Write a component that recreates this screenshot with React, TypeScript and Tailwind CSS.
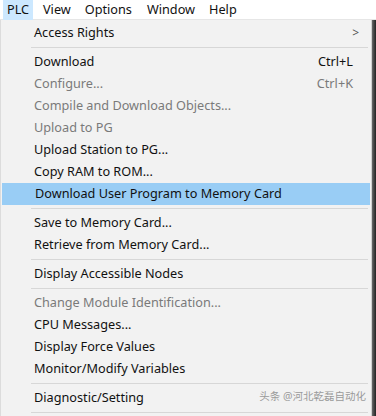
import React from 'react';

type Item = { label: string; shortcut?: string; disabled?: boolean; active?: boolean; submenu?: boolean } | 'sep';

const items: Item[] = [
  { label: 'Access Rights', submenu: true },
  'sep',
  { label: 'Download', shortcut: 'Ctrl+L' },
  { label: 'Configure...', shortcut: 'Ctrl+K', disabled: true },
  { label: 'Compile and Download Objects...', disabled: true },
  { label: 'Upload to PG', disabled: true },
  { label: 'Upload Station to PG...' },
  { label: 'Copy RAM to ROM...' },
  { label: 'Download User Program to Memory Card', active: true },
  'sep',
  { label: 'Save to Memory Card...' },
  { label: 'Retrieve from Memory Card...' },
  'sep',
  { label: 'Display Accessible Nodes' },
  'sep',
  { label: 'Change Module Identification...', disabled: true },
  { label: 'CPU Messages...' },
  { label: 'Display Force Values' },
  { label: 'Monitor/Modify Variables' },
  'sep',
  { label: 'Diagnostic/Setting' },
  'sep',
];

const font = { fontFamily: '"Noto Sans", "Noto Sans CJK SC", sans-serif' };

function MenuRow({ item }: { item: Exclude<Item, 'sep'> }) {
  return (
    <div
      className={`flex items-center h-[22px] pl-[33px] pr-[18px] text-[12.7px] ${
        item.active ? 'bg-[#99cdf5] mx-[1px] pl-[32px] pr-[17px]' : ''
      } ${item.disabled ? 'text-[#7a7a7a]' : 'text-[#111]'}`}
    >
      <span className="flex-1">{item.label}</span>
      {item.shortcut && <span>{item.shortcut}</span>}
      {item.submenu && <span className="text-[12px] text-[#555] -mr-[6px]">&gt;</span>}
    </div>
  );
}

export default function App() {
  return (
    <div className="w-[376px] h-[416px] overflow-hidden bg-white flex flex-col" style={font}>
      <div className="flex items-center h-[20px] text-[12.7px] text-[#111] border-b border-[#e6e6e6]">
        <span className="ml-[3px] px-[4px] w-[30px] h-[20px] flex items-center bg-[#cce8ff]">PLC</span>
        <span className="ml-[10px]">View</span>
        <span className="ml-[14px]">Options</span>
        <span className="ml-[15px]">Window</span>
        <span className="ml-[14px]">Help</span>
      </div>
      <div className="flex flex-1">
        <div className="relative w-[372px] bg-[#f2f2f2] border-l border-[#dcdcdc] border-r border-r-[#d0d0d0] pt-[2px]">
          {items.map((it, i) =>
            it === 'sep' ? (
              <div key={i} className="h-[7px] flex items-center pl-[30px] pr-[3px]">
                <div className="h-px w-full bg-[#d7d7d7]" />
              </div>
            ) : (
              <MenuRow key={i} item={it} />
            )
          )}
          <div className="absolute right-[5px] bottom-[11px] text-[10.5px] text-[#9a9a9a]">头条 @河北乾磊自动化</div>
        </div>
        <div className="flex-1 bg-gradient-to-r from-[#6a6a6a] to-[#222]" />
      </div>
    </div>
  );
}
